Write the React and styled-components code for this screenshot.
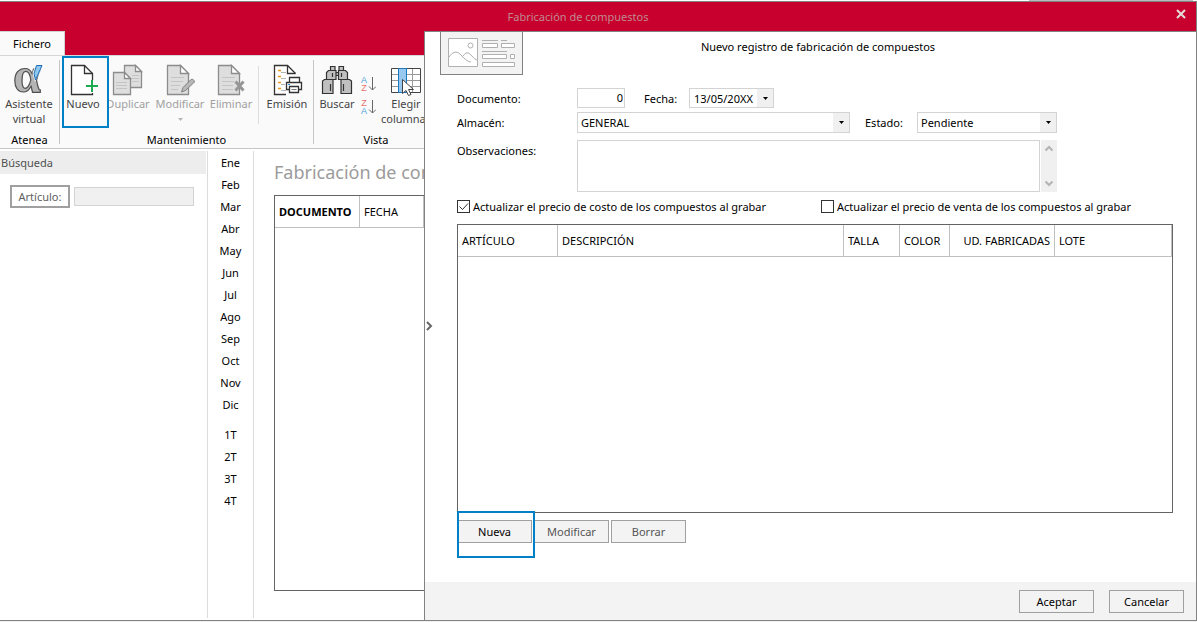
import React, { useState } from 'react';
import styled, { createGlobalStyle, css } from 'styled-components';

const GlobalStyle = createGlobalStyle`
  *, *::before, *::after {
    box-sizing: border-box;
  }

  body {
    margin: 0;
    background: #fff;
    color: #000;
    font: 11px/15px 'Noto Sans', 'Open Sans', sans-serif;
  }

  button, input, select, textarea {
    font: inherit;
    color: inherit;
    margin: 0;
    padding: 0;
    border-radius: 0;
  }
`;

/* ---------- window ---------- */

const Window = styled.div`
  display: flex;
  flex-direction: column;
  height: 100vh;
  overflow: hidden;
`;

const TopEdge = styled.div`
  flex: none;
  height: 1px;
  margin: 0 4px 0 86%;
  background: #b9b9b9;
`;

const BottomEdge = styled.div`
  flex: none;
  height: 1px;
  background: #f0f0f0;
`;

const Frame = styled.div`
  flex: 1;
  min-height: 0;
  display: flex;
  flex-direction: column;
  border: 1px solid #828282;
  border-left: none;
`;

const TitleBar = styled.header`
  flex: none;
  display: grid;
  grid-template-columns: 30px 1fr 30px;
  align-items: center;
  height: 29px;
  background: #c8002d;
`;

const WindowTitle = styled.h1`
  grid-column: 2;
  margin: 0;
  padding-right: 40px;
  font-size: 11px;
  font-weight: 400;
  text-align: center;
  color: #c08a90;
`;

const CloseButton = styled.button`
  display: flex;
  justify-content: center;
  padding-bottom: 6px;
  border: none;
  background: none;
`;

const Body = styled.div`
  flex: 1;
  min-height: 0;
  display: flex;
`;

const Main = styled.div`
  flex: 0 0 424px;
  display: flex;
  flex-direction: column;
  overflow: hidden;
`;

/* ---------- ribbon ---------- */

const TabStrip = styled.nav`
  flex: none;
  display: flex;
  height: 24px;
  background: #c8002d;
`;

const Tab = styled.button`
  width: 65px;
  border: 1px solid #d0d0d0;
  border-width: 1px 1px 0 0;
  background: #fafafa;
`;

const Ribbon = styled.div`
  flex: none;
  display: flex;
  height: 94px;
  border-top: 1px solid #d6d6d6;
  border-bottom: 1px solid #c6c6c6;
  background: #fafafa;
`;

const Group = styled.section`
  flex: none;
  display: flex;
  flex-direction: column;
  width: ${({ $width }) => $width}px;
  padding: 0 2px;
`;

const GroupTools = styled.div`
  display: flex;
  height: 72px;
`;

const GroupTitle = styled.div`
  margin-top: 4px;
  text-align: center;
  white-space: nowrap;
`;

const Separator = styled.div`
  flex: none;
  width: 1px;
  margin: ${({ $inner }) => ($inner ? '10px 4px 4px' : '4px 0')};
  background: ${({ $inner }) => ($inner ? '#dedede' : '#c6c6c6')};
`;

const highlight = css`
  &::after {
    content: '';
    position: absolute;
    z-index: 1;
    border: 2px solid #0080c6;
    pointer-events: none;
  }
`;

const Tool = styled.button`
  flex: none;
  display: flex;
  flex-direction: column;
  align-items: center;
  width: ${({ $width }) => $width}px;
  padding-top: 8px;
  border: none;
  background: none;
  color: #444;
  white-space: pre-line;

  &:disabled {
    color: #a0a0a0;
  }

  ${({ $highlighted }) =>
    $highlighted &&
    css`
      position: relative;
      ${highlight}

      &::after {
        inset: 0 -5px 0 0;
      }
    `}
`;

const ToolIcon = styled.svg`
  flex: none;
  width: 32px;
  height: 32px;
`;

const SortTools = styled.div`
  display: flex;
  flex-direction: column;
  gap: 6px;
  width: 22px;
  padding: 19px 0 0 3px;
`;

const SortButton = styled.button`
  display: flex;
  align-items: center;
  gap: 1px;
  height: 17px;
  border: none;
  background: none;
`;

const Letters = styled.span`
  display: flex;
  flex-direction: column;
  width: 6px;
  font-family: 'Liberation Sans', sans-serif;
  font-size: 9px;
  line-height: 8px;
  color: #e8716f;

  span:${({ $blue }) => $blue}-child {
    color: #4f9fd8;
  }
`;

/* ---------- workspace ---------- */

const Workspace = styled.div`
  flex: 1;
  min-height: 0;
  display: flex;
  padding: 2px 0;
`;

const SearchPanel = styled.aside`
  flex: 0 0 208px;
  min-width: 0;
  padding-right: 1px;
  border-right: 1px solid #dcdcdc;
`;

const SearchTitle = styled.h2`
  margin: 0;
  padding: 4px 1px;
  font-size: 11px;
  font-weight: 400;
  background: #ededed;
  color: #505050;
`;

const SearchRow = styled.div`
  display: flex;
  align-items: center;
  gap: 4px;
  padding: 11px 12px 0 10px;
`;

const FilterButton = styled.button`
  flex: none;
  width: 60px;
  height: 23px;
  border: 2px solid #a0a0a0;
  background: #fff;
  color: #606060;
`;

const FilterInput = styled.input`
  flex: 1;
  min-width: 0;
  height: 19px;
  border: 1px solid #d3d3d3;
  background: #f0f0f0;
`;

const Periods = styled.nav`
  flex: 0 0 46px;
  display: flex;
  flex-direction: column;
  gap: 8px;
  border-right: 1px solid #dcdcdc;
`;

const PeriodList = styled.div`
  display: flex;
  flex-direction: column;

  button {
    height: 22px;
    border: none;
    background: none;
  }
`;

const ListPane = styled.section`
  flex: 1;
  min-width: 0;
  display: flex;
  flex-direction: column;
  padding: 9px 0 27px 20px;
`;

const ListTitle = styled.h2`
  margin: 0 0 11px;
  font-size: 18px;
  line-height: 24px;
  font-weight: 400;
  color: #9b9b9b;
  white-space: nowrap;
`;

const GridBox = styled.div`
  flex: 1;
  border: 1px solid #646464;
  border-right-width: ${({ $open }) => ($open ? 0 : 1)}px;
`;

const Grid = styled.table`
  width: 100%;
  table-layout: fixed;
  border-collapse: separate;
  border-spacing: 0;

  th {
    height: 32px;
    padding: 0 4px;
    border-right: 1px solid #c0c0c0;
    border-bottom: 1px solid #c0c0c0;
    font-weight: 400;
    text-align: left;
    white-space: nowrap;
  }
`;

const HeadCell = styled.th`
  width: ${({ $width }) => ($width ? `${$width}px` : 'auto')};

  && {
    text-align: ${({ $right }) => ($right ? 'right' : 'left')};
    font-weight: ${({ $bold }) => ($bold ? 700 : 400)};
  }
`;

/* ---------- dialog ---------- */

const Dialog = styled.section`
  position: relative;
  flex: 1;
  min-width: 0;
  display: flex;
  flex-direction: column;
  border: 1px solid #828282;
  border-width: 1px 0 0 1px;
  background: #fff;
`;

const Expander = styled.button`
  position: absolute;
  left: 0;
  top: 50%;
  display: flex;
  transform: translateY(-50%);
  border: none;
  background: none;
`;

const DialogHead = styled.div`
  display: grid;
  grid-template-columns: 83px 1fr 83px;
  height: 56px;
  padding-left: 15px;
`;

const Thumbnail = styled.div`
  height: 43px;
  padding: 6px 7px;
  border: 1px solid #828282;
  border-top: none;
  background: #f3f3f3;
`;

const DialogTitle = styled.h2`
  margin: 7px 0 0;
  font-size: 11px;
  font-weight: 400;
  text-align: center;
`;

const Content = styled.div`
  flex: 1;
  min-height: 0;
  display: flex;
  flex-direction: column;
  padding: 0 23px 39px 32px;
`;

const Field = styled.div`
  display: flex;
  align-items: ${({ $top }) => ($top ? 'flex-start' : 'center')};
  margin-bottom: ${({ $gap }) => $gap}px;
`;

const Label = styled.label`
  flex: none;
  width: ${({ $width }) => $width}px;
  margin-left: ${({ $after }) => ($after ? 15 : 0)}px;
  padding-top: ${({ $top }) => ($top ? 3 : 0)}px;
`;

const inputBox = css`
  border: 1px solid #d3d3d3;
  background: #fff;
`;

const NumberInput = styled.input`
  ${inputBox}
  width: 48px;
  height: 20px;
  margin-right: 4px;
  padding: 0 1px 2px 0;
  text-align: right;
`;

const DateBox = styled.div`
  ${inputBox}
  display: flex;
  width: 85px;
  height: 20px;

  input {
    flex: 1;
    min-width: 0;
    padding-left: 4px;
    border: none;
  }

  button {
    display: flex;
    align-items: center;
    justify-content: center;
    width: 16px;
    border: none;
    background: #f0f0f0;
  }
`;

const SelectBox = styled.div`
  ${inputBox}
  position: relative;
  width: ${({ $width }) => $width}px;
  height: 21px;

  select {
    width: 100%;
    height: 100%;
    padding-left: 3px;
    border: none;
    background: none;
    appearance: none;
  }
`;

const SelectArrow = styled.span`
  position: absolute;
  inset: 0 0 0 auto;
  display: flex;
  align-items: center;
  justify-content: center;
  width: 16px;
  background: #f0f0f0;
  pointer-events: none;
`;

const Notes = styled.textarea`
  ${inputBox}
  width: 463px;
  height: 52px;
  resize: none;
  overflow: hidden;
`;

const ScrollTrack = styled.div`
  display: flex;
  flex-direction: column;
  align-items: center;
  justify-content: space-between;
  width: 16px;
  height: 52px;
  margin-left: 1px;
  padding: 5px 0;
  background: #f0f0f0;
`;

const Checks = styled.div`
  display: grid;
  grid-template-columns: 364px auto;
  margin-bottom: 10px;
`;

const CheckLabel = styled.label`
  display: flex;
  align-items: center;
  gap: 3px;
  white-space: nowrap;
`;

const CheckBox = styled.span`
  position: relative;
  display: flex;

  input {
    width: 13px;
    height: 13px;
    border: 1px solid #333;
    background: #fff;
    appearance: none;
  }

  svg {
    position: absolute;
    inset: 0;
    pointer-events: none;
  }
`;

const Actions = styled.div`
  display: flex;
  gap: 2px;
  padding-top: 7px;
`;

const Button = styled.button`
  width: 75px;
  height: 23px;
  border: 1px solid #a0a0a0;
  background: #f3f3f3;
  color: ${({ $muted }) => ($muted ? '#555' : '#000')};

  ${({ $highlighted }) =>
    $highlighted &&
    css`
      position: relative;
      ${highlight}

      &::after {
        inset: -10px -4px -16px -1px;
      }
    `}
`;

const Footer = styled.footer`
  flex: none;
  display: flex;
  justify-content: flex-end;
  gap: 15px;
  padding: 8px 12px 7px;
  background: #f3f3f3;
`;

/* ---------- icons ---------- */

function Page({ x = 3.5, y = 1.5, w = 22, h = 29, fold = 8, fill = '#fff', stroke = '#333' }) {
  return (
    <g fill={fill} stroke={stroke} strokeWidth="1.3">
      <path d={`M${x} ${y}h${w - fold}l${fold} ${fold}v${h - fold}h-${w}z`} />
      <path d={`M${x + w - fold} ${y}v${fold}h${fold}z`} fill="#fff" />
    </g>
  );
}

const GREY = { fill: '#dedede', stroke: '#8c8c8c' };

function AlphaIcon() {
  return (
    <ToolIcon viewBox="0 0 32 32">
      <text
        x="0"
        y="28"
        fontFamily="Liberation Serif, serif"
        fontSize="50"
        fontWeight="700"
        fill="#b4b4b4"
        stroke="#505050"
        strokeWidth="1.2"
      >
        α
      </text>
      <path d="M31 0h-8l-3.500 9 2.500 9z" fill="#fafafa" />
      <path d="M29 1.500h-5.500l-2.500 8 1.500 6.500z" fill="#8cc8f0" stroke="#1e6cb4" />
    </ToolIcon>
  );
}

function NewIcon() {
  return (
    <ToolIcon viewBox="0 0 32 32">
      <path d="M25.500 16V9.500l-8-8h-13v29h21V29" fill="#fff" stroke="#333" strokeWidth="1.3" />
      <path d="M17.500 1.500v8h8" fill="none" stroke="#333" strokeWidth="1.3" />
      <path d="M19 22h12M25 16v12" stroke="#1eaa50" strokeWidth="2" />
    </ToolIcon>
  );
}

function DuplicateIcon() {
  return (
    <ToolIcon viewBox="0 0 32 32">
      <Page x={12.5} y={1.5} w={17} h={22} fold={6} {...GREY} />
      <path d="M20 11.500h7M20 14.500h7M20 17.500h7" stroke="#c4c4c4" />
      <Page x={1.5} y={8.5} w={17} h={22} fold={6} {...GREY} />
      <path d="M4 18.500h11M4 21.500h11M4 24.500h11" stroke="#c4c4c4" />
    </ToolIcon>
  );
}

function EditIcon() {
  return (
    <ToolIcon viewBox="0 0 32 32">
      <Page w={21} {...GREY} />
      <path d="M7 13.500h13M7 17.500h12M7 21.500h9M7 25.500h7" stroke="#c4c4c4" />
      <path d="M17.500 28l1.500-4.500 8-8q2-1 3 1t-.5 2.500l-8 7.500z" fill="#b8b8b8" stroke="#808080" />
    </ToolIcon>
  );
}

function DeleteIcon() {
  return (
    <ToolIcon viewBox="0 0 32 32">
      <Page w={21} {...GREY} />
      <path d="M7 13.500h13M7 17.500h12M7 21.500h11M7 25.500h11" stroke="#c4c4c4" />
      <path d="M20.500 17.500l8 9M28.500 17.500l-8 9" stroke="#969696" strokeWidth="3" />
    </ToolIcon>
  );
}

function PrintIcon() {
  return (
    <ToolIcon viewBox="0 0 32 32">
      <path d="M15 30.500H3.500v-29h13l8 8" fill="#fff" stroke="#333" strokeWidth="1.3" />
      <path d="M16.500 1.500v8h8" fill="none" stroke="#333" strokeWidth="1.3" />
      <path d="M7 6.500h3M7 12.500h3M7 18.500h3M7 24.500h3" stroke="#f0961e" strokeWidth="1.5" />
      <path d="M10 8.500h5M10 14.500h5M10 20.500h4M10 26.500h5" stroke="#b4b4b4" />
      <g fill="#fff" stroke="#333" strokeWidth="1.3">
        <path d="M18.500 18v-4.500h10V18" />
        <path d="M15.500 18.500h15v7h-15z" />
        <path d="M18.500 22.500h9v6h-9z" />
      </g>
      <path d="M17 20.500h2" stroke="#2b8fd6" />
      <path d="M20.500 25.500h5" stroke="#777" />
    </ToolIcon>
  );
}

function BinocularsIcon() {
  return (
    <ToolIcon viewBox="0 0 32 32" fill="#c0c0c0" stroke="#333" strokeWidth="1.2">
      <path d="M9.500 2.500h4.500v4H9.500zM18 2.500h4.500v4H18z" />
      <path d="M13 8.500h6v3h-6z" />
      <path d="M7.500 6.500h7.500v9H5.500v-7zM17.500 6.500h7l2 2v7h-9z" />
      <path d="M3.500 15.500h8.500v14H1.500V17zM20 15.500h8.500l2 1.500v12.500H20z" />
      <path d="M11.500 9v4M20.500 9v4M9.500 20v7M22.500 20v7" />
    </ToolIcon>
  );
}

function ColumnsIcon() {
  return (
    <ToolIcon viewBox="0 0 32 32">
      <path d="M1.500 4.500h29v24h-29z" fill="#fff" stroke="#444" />
      <path d="M2 10.500h28M2 16.500h28M2 22.500h28M22.500 5v23" stroke="#999" />
      <path d="M8.500 4.500h8v24h-8z" fill="#96c8f0" stroke="#1e78be" />
      <path
        d="M12.500 15.500v14l3.500-3 2.500 5 2.500-1-2.500-5h5z"
        fill="#fff"
        stroke="#444"
      />
    </ToolIcon>
  );
}

function SortArrow() {
  return (
    <svg width="8" height="16" viewBox="0 0 8 16" fill="none" stroke="#666">
      <path d="M4.500 1v13M1 10.500l3.500 3.500L8 10.500" />
    </svg>
  );
}

function Caret() {
  return (
    <svg width="5" height="3" viewBox="0 0 5 3">
      <path d="M0 0h5L2.500 3z" />
    </svg>
  );
}

function Chevron({ down }) {
  return (
    <svg width="8" height="7" viewBox="0 0 8 7" fill="none" stroke="#b4b4b4" strokeWidth="2">
      <path d={down ? 'M.5 1.500L4 5l3.500-3.500' : 'M.5 5.500L4 2l3.500 3.500'} />
    </svg>
  );
}

function FormPreview() {
  return (
    <svg width="67" height="30" viewBox="0 0 67 30" fill="none" stroke="#b0b0b0">
      <path d="M.5.5h29v28H.5z" fill="#fff" />
      <circle cx="22.500" cy="7.500" r="2.500" />
      <path d="M1 19q6-9 12-2t10 7M15 18q4-6 8-1t6 5" />
      <path d="M34 2.500h16M53 2.500h6M34 13.500h25" />
      <path
        d="M34.500 5.500h15v4h-15zM53.500 5.500h13v4h-13zM34.500 16.500h24v4h-24zM62.500 16.500h4v4h-4zM34.500 24.500h32v4h-32z"
        fill="#fff"
      />
    </svg>
  );
}

/* ---------- screen ---------- */

const MONTHS = ['Ene', 'Feb', 'Mar', 'Abr', 'May', 'Jun', 'Jul', 'Ago', 'Sep', 'Oct', 'Nov', 'Dic'];
const QUARTERS = ['1T', '2T', '3T', '4T'];

const COLUMNS = [
  { title: 'ARTÍCULO', width: 100 },
  { title: 'DESCRIPCIÓN' },
  { title: 'TALLA', width: 56 },
  { title: 'COLOR', width: 50 },
  { title: 'UD. FABRICADAS', width: 105, right: true },
  { title: 'LOTE', width: 117 },
];

function Check({ label, initial }) {
  const [checked, setChecked] = useState(initial);

  return (
    <CheckLabel>
      <CheckBox>
        <input type="checkbox" checked={checked} onChange={() => setChecked((prev) => !prev)} />
        {checked && (
          <svg width="13" height="13" viewBox="0 0 13 13" fill="none" stroke="#333">
            <path d="M2.500 6.500l3 3 5.500-6" />
          </svg>
        )}
      </CheckBox>
      {label}
    </CheckLabel>
  );
}

function Select({ id, width, options }) {
  return (
    <SelectBox $width={width}>
      <select id={id}>
        {options.map((option) => (
          <option key={option}>{option}</option>
        ))}
      </select>
      <SelectArrow>
        <Caret />
      </SelectArrow>
    </SelectBox>
  );
}

function RibbonBar() {
  return (
    <Ribbon>
      <Group $width={59}>
        <GroupTools>
          <Tool $width={54}>
            <AlphaIcon />
            {'Asistente\nvirtual'}
          </Tool>
        </GroupTools>
        <GroupTitle>Atenea</GroupTitle>
      </Group>
      <Separator />
      <Group $width={253}>
        <GroupTools>
          <Tool $width={42} $highlighted>
            <NewIcon />
            Nuevo
          </Tool>
          <Tool $width={48} disabled>
            <DuplicateIcon />
            Duplicar
          </Tool>
          <Tool $width={56} disabled>
            <EditIcon />
            Modificar
            <svg width="5" height="15" viewBox="0 0 5 15" fill="#b4b4b4">
              <path d="M0 7h5L2.500 10z" />
            </svg>
          </Tool>
          <Tool $width={46} disabled>
            <DeleteIcon />
            Eliminar
          </Tool>
          <Separator $inner />
          <Tool $width={48}>
            <PrintIcon />
            Emisión
          </Tool>
        </GroupTools>
        <GroupTitle>Mantenimiento</GroupTitle>
      </Group>
      <Separator />
      <Group $width={124}>
        <GroupTools>
          <Tool $width={42}>
            <BinocularsIcon />
            Buscar
          </Tool>
          <SortTools>
            <SortButton aria-label="Orden ascendente">
              <Letters $blue="first">
                <span>A</span>
                <span>Z</span>
              </Letters>
              <SortArrow />
            </SortButton>
            <SortButton aria-label="Orden descendente">
              <Letters $blue="last">
                <span>Z</span>
                <span>A</span>
              </Letters>
              <SortArrow />
            </SortButton>
          </SortTools>
          <Tool $width={52}>
            <ColumnsIcon />
            {'Elegir\ncolumnas'}
          </Tool>
        </GroupTools>
        <GroupTitle>Vista</GroupTitle>
      </Group>
    </Ribbon>
  );
}

function CompoundDialog() {
  return (
    <Dialog>
      <DialogHead>
        <Thumbnail>
          <FormPreview />
        </Thumbnail>
        <DialogTitle>Nuevo registro de fabricación de compuestos</DialogTitle>
      </DialogHead>
      <Expander aria-label="Desplegar">
        <svg width="9" height="10" viewBox="0 0 9 10" fill="none" stroke="#666" strokeWidth="2">
          <path d="M2 1l4 4-4 4" />
        </svg>
      </Expander>
      <Content>
        <Field $gap={4}>
          <Label htmlFor="documento" $width={120}>Documento:</Label>
          <NumberInput id="documento" defaultValue="0" />
          <Label htmlFor="fecha" $width={45} $after>Fecha:</Label>
          <DateBox>
            <input id="fecha" defaultValue="13/05/20XX" />
            <button aria-label="Elegir fecha">
              <Caret />
            </button>
          </DateBox>
        </Field>
        <Field $gap={7}>
          <Label htmlFor="almacen" $width={120}>Almacén:</Label>
          <Select id="almacen" width={273} options={['GENERAL']} />
          <Label htmlFor="estado" $width={52} $after>Estado:</Label>
          <Select id="estado" width={140} options={['Pendiente']} />
        </Field>
        <Field $gap={7} $top>
          <Label htmlFor="observaciones" $width={120} $top>Observaciones:</Label>
          <Notes id="observaciones" />
          <ScrollTrack>
            <Chevron />
            <Chevron down />
          </ScrollTrack>
        </Field>
        <Checks>
          <Check label="Actualizar el precio de costo de los compuestos al grabar" initial />
          <Check label="Actualizar el precio de venta de los compuestos al grabar" initial={false} />
        </Checks>
        <GridBox>
          <Grid>
            <thead>
              <tr>
                {COLUMNS.map(({ title, width, right }) => (
                  <HeadCell key={title} $width={width} $right={right}>
                    {title}
                  </HeadCell>
                ))}
              </tr>
            </thead>
          </Grid>
        </GridBox>
        <Actions>
          <Button $highlighted>Nueva</Button>
          <Button $muted>Modificar</Button>
          <Button $muted>Borrar</Button>
        </Actions>
      </Content>
      <Footer>
        <Button>Aceptar</Button>
        <Button>Cancelar</Button>
      </Footer>
    </Dialog>
  );
}

export default function App() {
  return (
    <>
      <GlobalStyle />
      <Window>
        <TopEdge />
        <Frame>
          <TitleBar>
            <WindowTitle>Fabricación de compuestos</WindowTitle>
            <CloseButton aria-label="Cerrar">
              <svg width="10" height="10" viewBox="0 0 10 10" stroke="#e6dcdc" strokeWidth="2">
                <path d="M1 1l8 8M9 1L1 9" />
              </svg>
            </CloseButton>
          </TitleBar>
          <Body>
            <Main>
              <TabStrip>
                <Tab>Fichero</Tab>
              </TabStrip>
              <RibbonBar />
              <Workspace>
                <SearchPanel>
                  <SearchTitle>Búsqueda</SearchTitle>
                  <SearchRow>
                    <FilterButton>Artículo:</FilterButton>
                    <FilterInput aria-label="Artículo" />
                  </SearchRow>
                </SearchPanel>
                <Periods>
                  <PeriodList>
                    {MONTHS.map((month) => (
                      <button key={month}>{month}</button>
                    ))}
                  </PeriodList>
                  <PeriodList>
                    {QUARTERS.map((quarter) => (
                      <button key={quarter}>{quarter}</button>
                    ))}
                  </PeriodList>
                </Periods>
                <ListPane>
                  <ListTitle>Fabricación de compuestos</ListTitle>
                  <GridBox $open>
                    <Grid>
                      <thead>
                        <tr>
                          <HeadCell $width={85} $bold>DOCUMENTO</HeadCell>
                          <HeadCell>FECHA</HeadCell>
                        </tr>
                      </thead>
                    </Grid>
                  </GridBox>
                </ListPane>
              </Workspace>
            </Main>
            <CompoundDialog />
          </Body>
        </Frame>
        <BottomEdge />
      </Window>
    </>
  );
}
